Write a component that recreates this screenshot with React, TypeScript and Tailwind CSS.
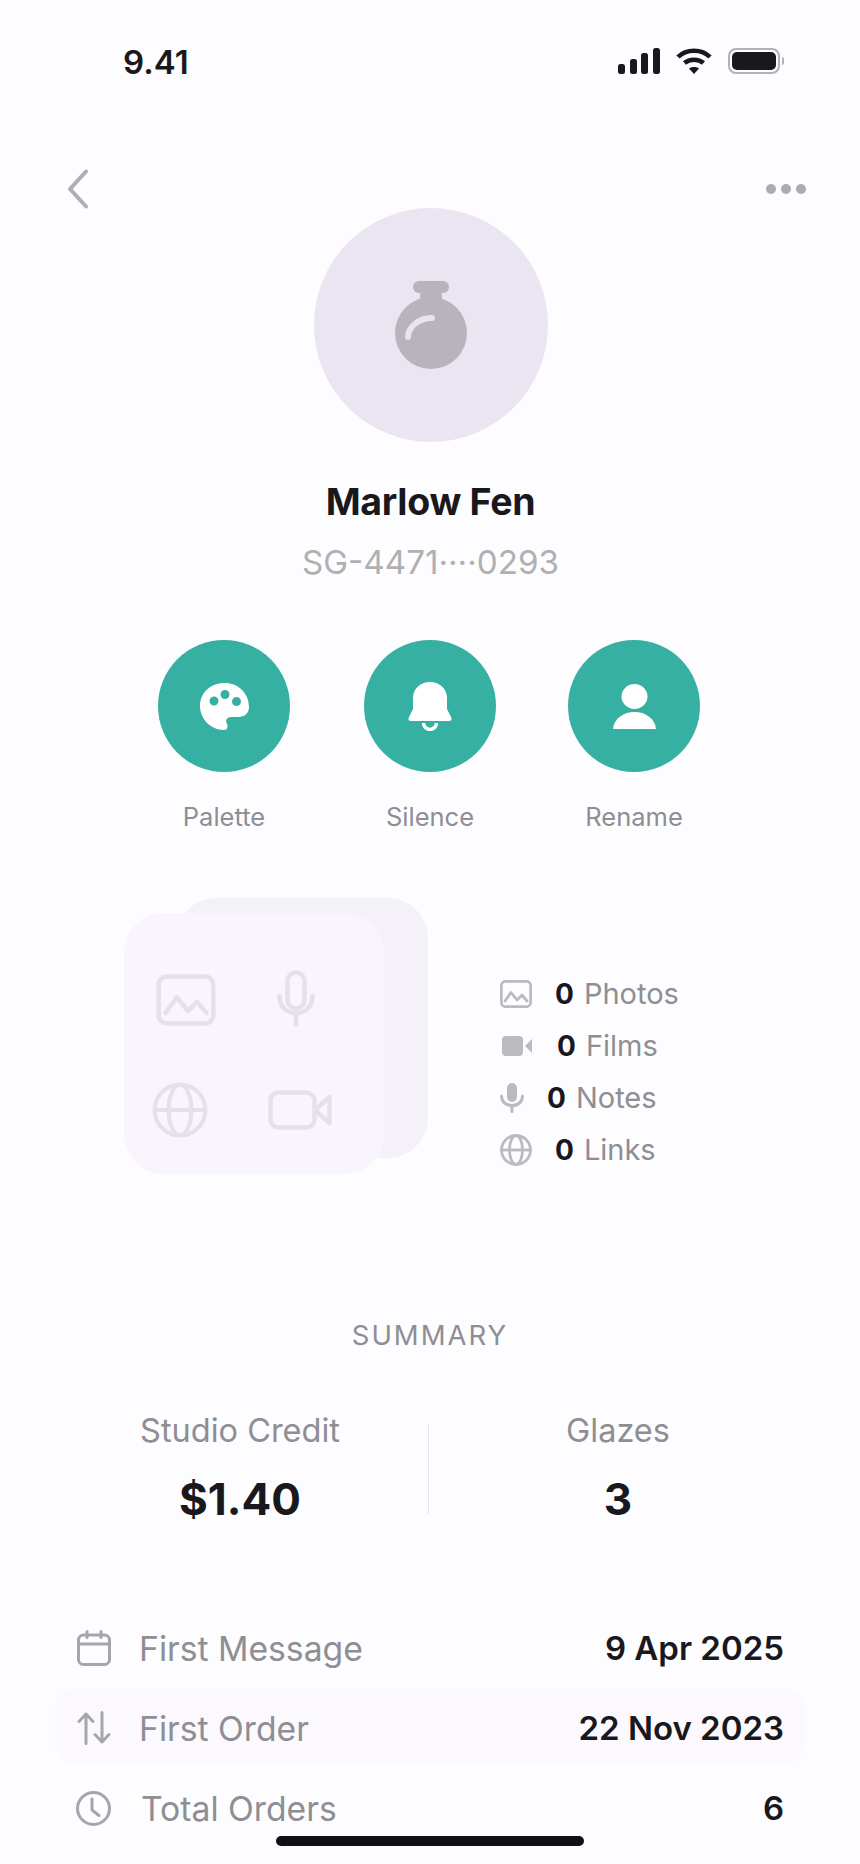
import type { ReactNode } from "react";

function ImageIcon({ className, weight = 2.4 }: { className?: string; weight?: number }) {
  return (
    <svg viewBox="0 0 32 28" fill="none" stroke="currentColor" strokeWidth={weight} strokeLinejoin="round" strokeLinecap="round" className={className}>
      <rect x="1.300" y="1.300" width="29.400" height="25.400" rx="4.500" />
      <path d="M5 21l6-8.500 6 7.500 5-5 5 6" />
    </svg>
  );
}

function GlobeIcon({ className, weight = 2.4 }: { className?: string; weight?: number }) {
  return (
    <svg viewBox="0 0 32 32" fill="none" stroke="currentColor" strokeWidth={weight} className={className}>
      <circle cx="16" cy="16" r="14.500" />
      <ellipse cx="16" cy="16" rx="6.500" ry="14.500" />
      <path d="M1.500 16h29" />
    </svg>
  );
}

function Circle({ children }: { children: ReactNode }) {
  return <div className="w-[132px] h-[132px] rounded-full bg-[#36b0a3] flex items-center justify-center">{children}</div>;
}

function Action({ label, className, children }: { label: string; className?: string; children: ReactNode }) {
  return (
    <div className={`flex flex-col items-center ${className ?? ""}`}>
      <Circle>{children}</Circle>
      <span className="mt-[30px] text-[25.5px] leading-[30px] text-[#8e8e93] whitespace-nowrap">{label}</span>
    </div>
  );
}

function DetailRow({ label, value, icon, highlight, labelClass }: { label: string; value: string; icon: ReactNode; highlight?: boolean; labelClass?: string }) {
  return (
    <div className={`px-[21px] rounded-[20px] flex items-center ${highlight ? "h-[76px] mb-[4px] pt-[4px] bg-[#fbf9fd]" : "h-[80px]"}`}>
      <div className="w-[35px] flex justify-center text-[#a6a6aa]">{icon}</div>
      <span className={`mt-[2px] text-[33.700px] leading-[40px] text-[#8e8e93] ${labelClass ?? "ml-[28px]"}`}>{label}</span>
      <span className="ml-auto text-[33px] leading-[40px] font-semibold text-[#19181c]">{value}</span>
    </div>
  );
}

const stats = [
  {
    label: "Photos",
    gap: "ml-[23px]",
    icon: <ImageIcon className="w-[32px] h-[28px]" weight={2.800} />,
  },
  {
    label: "Films",
    gap: "ml-[25px]",
    icon: (
      <svg viewBox="0 0 30 20" fill="currentColor" className="w-[30px] h-[20px] ml-[2px]">
        <rect x="0" y="0" width="21" height="20" rx="4" />
        <path d="M23 10l7-7v14z" />
      </svg>
    ),
  },
  {
    label: "Notes",
    gap: "ml-[23px]",
    icon: (
      <svg viewBox="0 0 24 30" fill="none" stroke="currentColor" strokeWidth="3" strokeLinecap="round" className="w-[24px] h-[30px]">
        <rect x="7" y="0" width="10" height="19" rx="5" fill="currentColor" stroke="none" />
        <path d="M1.500 13c0 6 4.500 9.500 10.500 9.500s10.500-3.500 10.500-9.500M12 23v5.500" />
      </svg>
    ),
  },
  {
    label: "Links",
    gap: "ml-[23px]",
    icon: <GlobeIcon className="w-[32px] h-[32px]" weight={2.800} />,
  },
];

export default function App() {
  return (
    <div className="relative w-[860px] h-[1864px] overflow-hidden bg-[#fdfcfe] font-['Inter',sans-serif]">
      {/* Status bar */}
      <div className="h-[168px] pt-[42px] pl-[123px] pr-[76px] flex items-start justify-between">
        <span className="text-[33px] leading-[40px] font-semibold text-[#19181c]">9.41</span>
        <div className="flex items-center gap-[16px] h-[38px] text-[#19181c]">
          <svg viewBox="0 0 42 26" fill="currentColor" className="w-[42px] h-[26px]">
            <rect x="0" y="16" width="7" height="10" rx="2.500" />
            <rect x="12" y="11" width="7" height="15" rx="2.500" />
            <rect x="23" y="5" width="7" height="21" rx="2.500" />
            <rect x="35" y="0" width="7" height="26" rx="2.500" />
          </svg>
          <svg viewBox="0 0 36 26" fill="none" stroke="currentColor" strokeWidth="4.500" className="w-[36px] h-[26px]">
            <path d="M2 9C10 0.500 26 0.500 34 9" />
            <path d="M8.500 15c5-4.500 14-4.500 19 0" />
            <path d="M13 20.500l5 5.500 5-5.500c-2.500-2-7.500-2-10 0z" fill="currentColor" stroke="none" />
          </svg>
          <div className="flex items-center">
            <div className="w-[52px] h-[26px] rounded-[8px] border-2 border-[#b3b1b5] p-[2px]">
              <div className="w-full h-full rounded-[5px] bg-[#19181c]" />
            </div>
            <div className="ml-[2px] w-[2px] h-[8px] rounded-r-full bg-[#b3b1b5]" />
          </div>
        </div>
      </div>

      {/* Nav */}
      <div className="h-[40px] pl-[67px] pr-[54px] flex items-center justify-between">
        <svg viewBox="0 0 22 40" fill="none" stroke="#afafb3" strokeWidth="4" strokeLinecap="round" strokeLinejoin="round" className="w-[22px] h-[40px] mt-[1px]">
          <path d="M19 2.500L3 20l16 17.500" />
        </svg>
        <div className="flex gap-[5px] mt-[1px]">
          <div className="w-[10px] h-[10px] rounded-full bg-[#acacb0]" />
          <div className="w-[10px] h-[10px] rounded-full bg-[#acacb0]" />
          <div className="w-[10px] h-[10px] rounded-full bg-[#acacb0]" />
        </div>
      </div>

      {/* Profile */}
      <div className="flex flex-col items-center pl-[1px]">
        <div className="w-[234px] h-[234px] rounded-full bg-[#ebe5f1] flex items-center justify-center">
          <svg viewBox="0 0 72 88" className="w-[72px] h-[88px]">
            <rect x="18" y="0" width="36" height="12" rx="6" fill="#b9b3bb" />
            <path d="M26 8h20l1.500 12h-23z" fill="#b9b3bb" />
            <circle cx="36" cy="52" r="36" fill="#b9b3bb" />
            <path d="M13 56c0-10 11-19 24-19" fill="none" stroke="#e9e4ed" strokeWidth="6" strokeLinecap="round" />
          </svg>
        </div>
        <h1 className="mt-[38px] text-[37.500px] leading-[44px] font-bold tracking-[-0.3px] text-[#19181c]">Marlow Fen</h1>
        <p className="mt-[18px] text-[33.200px] leading-[40px] text-[#b0b0b3]">SG-4471····0293</p>
      </div>

      {/* Actions */}
      <div className="mt-[58px] flex pl-[158px]">
        <Action label="Palette">
          <svg viewBox="0 0 49 47" className="w-[49px] h-[47px]" fill="#fff">
            <path
              fillRule="evenodd"
              d="M25 0C10 0 0 10 0 23c0 13 11 24 24 24 4 0 4-4 3-6-2-4 0-7 4-7h7c7 0 11-4 11-10C49 10 38 0 25 0zM14 13.500a4.500 4.500 0 1 0 0 9 4.500 4.500 0 0 0 0-9zM25 7a4.500 4.500 0 1 0 0 9 4.500 4.500 0 0 0 0-9zM36.500 14a4.500 4.500 0 1 0 0 9 4.500 4.500 0 0 0 0-9z"
            />
          </svg>
        </Action>
        <Action label="Silence" className="ml-[74px]">
          <svg viewBox="0 0 44 49" className="w-[44px] h-[49px]" fill="#fff">
            <path d="M22 0C12 0 5 7 5 16v11L.5 36C0 38 1 39 3 39h38c2 0 3-1 2.500-3L39 27V16C39 7 32 0 22 0z" />
            <path d="M15.500 41a6.500 6.500 0 0 0 13 0" fill="none" stroke="#fff" strokeWidth="3.500" />
          </svg>
        </Action>
        <Action label="Rename" className="ml-[72px]">
          <svg viewBox="0 0 43 45" className="w-[43px] h-[45px]" fill="#fff">
            <ellipse cx="21.500" cy="12.500" rx="13" ry="12.500" />
            <path d="M0 45C1 34 11 28 21.500 28S42 34 43 45z" />
          </svg>
        </Action>
      </div>

      {/* Media */}
      <div className="mt-[66px] flex items-start">
        <div className="ml-[124px] grid w-[304px]">
          <div className="col-start-1 row-start-1 ml-[52px] w-[252px] h-[260px] rounded-[40px] bg-[#f5f1f8]" />
          <div className="col-start-1 row-start-1 mt-[15px] w-[260px] h-[261px] rounded-[40px] bg-[#f9f4fd] text-[#e6e1e9]">
            <div className="grid grid-cols-[116px_64px] pl-[28px] pt-[57px] gap-y-[55px]">
              <ImageIcon className="w-[60px] h-[52px] ml-[4px] mt-[4px]" />
              <svg viewBox="0 0 38 57" fill="none" stroke="currentColor" strokeWidth="4.500" strokeLinecap="round" className="w-[38px] h-[57px] ml-[9px]">
                <rect x="10.500" y="2.500" width="17" height="36" rx="8.500" />
                <path d="M2.500 26c0 11 7 17 16.500 17s16.500-6 16.500-17M19 43v11.500" />
              </svg>
              <GlobeIcon className="w-[56px] h-[56px]" />
              <svg viewBox="0 0 64 40" fill="none" stroke="currentColor" strokeWidth="4.500" strokeLinejoin="round" className="w-[64px] h-[40px] mt-[8px]">
                <rect x="2.500" y="2.500" width="44" height="35" rx="8" />
                <path d="M47 20l14.500-13v26z" />
              </svg>
            </div>
          </div>
        </div>
        <div className="ml-[72px] mt-[76px] flex flex-col gap-[12px]">
          {stats.map((s) => (
            <div key={s.label} className="h-[40px] flex items-center text-[#bcbabe]">
              {s.icon}
              <span className={`${s.gap} text-[28px] font-bold text-[#19181c]`}>0</span>
              <span className="ml-[10px] text-[29px] text-[#8e8e93]">{s.label}</span>
            </div>
          ))}
        </div>
      </div>

      {/* Summary */}
      <h2 className="mt-[145px] text-center text-[27.500px] leading-[32px] tracking-[2px] text-[#8e8e93]">SUMMARY</h2>
      <div className="mt-[60px] flex items-center">
        <div className="ml-[60px] w-[360px] flex flex-col items-center">
          <span className="text-[32.500px] leading-[40px] text-[#8e8e93]">Studio Credit</span>
          <span className="mt-[20px] text-[44px] leading-[56px] font-bold text-[#19181c]">$1.40</span>
        </div>
        <div className="ml-[8px] w-[1px] h-[89px] bg-[#e6e4e8]" />
        <div className="w-[378px] flex flex-col items-center">
          <span className="text-[32.500px] leading-[40px] text-[#8e8e93]">Glazes</span>
          <span className="mt-[20px] text-[44px] leading-[56px] font-bold text-[#19181c]">3</span>
        </div>
      </div>

      {/* Details */}
      <div className="mt-[81px] mx-[55px]">
        <DetailRow
          label="First Message"
          value="9 Apr 2025"
          icon={
            <svg viewBox="0 0 34 36" fill="none" stroke="currentColor" strokeWidth="3" strokeLinecap="round" className="w-[34px] h-[36px]">
              <rect x="1.500" y="5" width="31" height="29.500" rx="5" />
              <path d="M1.500 14h31M10 1.500v6M24 1.500v6" />
            </svg>
          }
        />
        <DetailRow
          highlight
          label="First Order"
          value="22 Nov 2023"
          icon={
            <svg viewBox="0 0 34 34" fill="none" stroke="currentColor" strokeWidth="3" strokeLinecap="round" strokeLinejoin="round" className="w-[34px] h-[34px]">
              <path d="M9 32.500V3M2 10.500L9 3l7 7.500M25 1.500V31M18 23.500l7 7.500 7-7.500" />
            </svg>
          }
        />
        <DetailRow
          label="Total Orders"
          value="6"
          labelClass="ml-[30px]"
          icon={
            <svg viewBox="0 0 35 35" fill="none" stroke="currentColor" strokeWidth="3" strokeLinecap="round" strokeLinejoin="round" className="w-[35px] h-[35px]">
              <circle cx="17.500" cy="17.500" r="16" />
              <path d="M16 8v11l7 5.500" />
            </svg>
          }
        />
      </div>

      {/* Home indicator */}
      <div className="absolute left-[276px] bottom-[18px] w-[308px] h-[10px] rounded-full bg-[#111014]" />
    </div>
  );
}
